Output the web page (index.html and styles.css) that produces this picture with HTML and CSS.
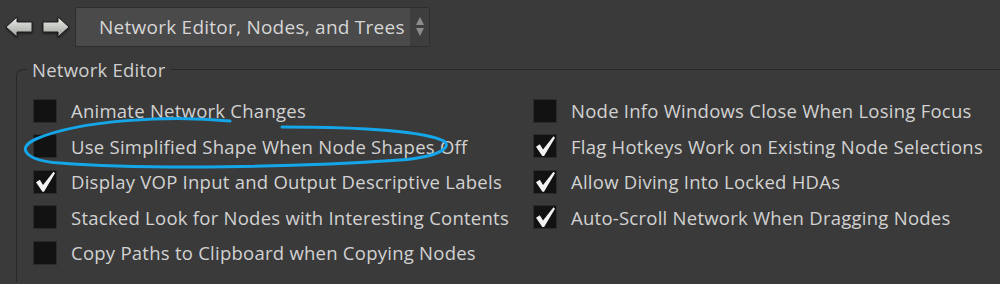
FILE: index.html
```html
<!DOCTYPE html>
<html lang="en">

<head>
    <meta charset="UTF-8">
    <title>Network Editor, Nodes, and Trees</title>
    <link rel="stylesheet" href="styles.css">
</head>

<body>
    <!-- top bar: history arrows + page selector -->
    <div class="bar">
        <svg class="arrow" width="28" height="22" viewBox="0 0 28 22">
            <defs>
                <linearGradient id="ag" x1="0" y1="0" x2="0" y2="1">
                    <stop offset="0" stop-color="#eceeea" />
                    <stop offset="1" stop-color="#9ea09b" />
                </linearGradient>
            </defs>
            <polygon points="1,11 12,1 12,6 27,6 27,16 12,16 12,21" fill="url(#ag)" stroke="#1e1e1e" stroke-width="1" />
        </svg>
        <svg class="arrow" width="28" height="22" viewBox="0 0 28 22">
            <polygon points="27,11 16,1 16,6 1,6 1,16 16,16 16,21" fill="url(#ag)" stroke="#1e1e1e" stroke-width="1" />
        </svg>
        <div class="select">
            <span class="select-text">Network Editor, Nodes, and Trees</span>
            <span class="spin">
                <svg width="10" height="22" viewBox="0 0 10 22">
                    <polygon points="5,1 9,9 1,9" fill="#8c8c8c" />
                    <polygon points="1,12 9,12 5,20" fill="#8c8c8c" />
                </svg>
            </span>
        </div>
    </div>

    <fieldset class="group">
        <legend>Network Editor</legend>
        <div class="cols">
            <div class="col">
                <div class="opt"><span class="box"></span>Animate Network Changes</div>
                <div class="opt"><span class="box"></span>Use Simplified Shape When Node Shapes Off</div>
                <div class="opt"><span class="box on"></span>Display VOP Input and Output Descriptive Labels</div>
                <div class="opt"><span class="box"></span>Stacked Look for Nodes with Interesting Contents</div>
                <div class="opt"><span class="box"></span>Copy Paths to Clipboard when Copying Nodes</div>
            </div>
            <div class="col">
                <div class="opt"><span class="box"></span>Node Info Windows Close When Losing Focus</div>
                <div class="opt"><span class="box on"></span>Flag Hotkeys Work on Existing Node Selections</div>
                <div class="opt"><span class="box on"></span>Allow Diving Into Locked HDAs</div>
                <div class="opt"><span class="box on"></span>Auto-Scroll Network When Dragging Nodes</div>
            </div>
        </div>
    </fieldset>

    <!-- hand drawn marker ring over the second option -->
    <svg class="scribble" width="1000" height="284" viewBox="0 0 1000 284">
        <path d="M230 121 C170 115 80 120 36 139 C14 149 28 161 60 163 C150 170 300 167 400 160 C440 157 452 147 444 141 C420 130 350 127 282 127"
            fill="none" stroke="#14a6e8" stroke-width="3" stroke-linecap="round" />
    </svg>
</body>

</html>
```

FILE: styles.css
```css
html,
body {
    height: 100%;
}

body {
    margin: 0;
    background: #3a3a3a;
    color: #d2d2d2;
    font-family: "Open Sans", "Noto Sans", sans-serif;
    font-size: 18.5px;
    letter-spacing: 0.25px;
    overflow: hidden;
    position: relative;
}

.bar {
    display: flex;
    align-items: center;
    padding: 7px 0 0 5px;
    height: 40px;
}

.arrow {
    margin-right: 9px;
    filter: drop-shadow(0 1px 1px rgba(0, 0, 0, 0.6));
}

.arrow+.arrow {
    margin-right: 5px;
}

.select {
    display: flex;
    width: 355px;
    height: 40px;
    box-sizing: border-box;
    background: #4a4a4a;
    border: 1px solid #2e2e2e;
    border-radius: 2px;
}

.select-text {
    flex: 1;
    line-height: 38px;
    padding-left: 23px;
    font-size: 19px;
    color: #d6d6d6;
}

.spin {
    width: 19px;
    background: #3e3e3e;
    display: flex;
    align-items: center;
    justify-content: center;
}

.group {
    margin: 10px -20px 0 16px;
    padding: 11px 0 0 16px;
    border: 1px solid #272727;
    border-right: none;
    border-bottom: none;
    border-top-left-radius: 7px;
    height: 213px;
}

.group legend {
    padding: 0 5px;
    margin-left: -6px;
    color: #cfcfcf;
}

.cols {
    display: grid;
    grid-template-columns: 500px auto;
}

.opt {
    display: flex;
    align-items: center;
    height: 35.5px;
    white-space: nowrap;
}

.box {
    width: 24px;
    height: 24px;
    box-sizing: border-box;
    background: #121212;
    border: 1px solid #2b2b2b;
    margin-right: 14px;
    flex: none;
    position: relative;
}

/* check mark */
.box.on::after {
    content: "";
    position: absolute;
    left: 2px;
    top: 1px;
    width: 19px;
    height: 20px;
    background: #f2f2f2;
    clip-path: polygon(0% 52%, 20% 40%, 37% 66%, 92% 0%, 100% 8%, 42% 100%, 34% 100%);
}

.scribble {
    position: absolute;
    left: 0;
    top: 0;
    pointer-events: none;
}
```
